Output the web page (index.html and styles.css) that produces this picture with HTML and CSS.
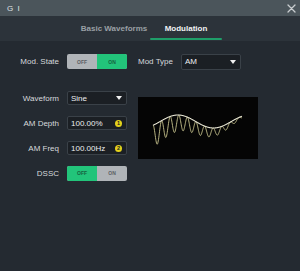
FILE: index.html
```html
<!DOCTYPE html>
<html>
<head>
<meta charset="utf-8">
<link rel="stylesheet" href="styles.css">
</head>
<body>
<div class="win">
  <div class="titlebar">
    <span class="title">G I</span>
    <svg class="close" width="9" height="9" viewBox="0 0 9 9"><path d="M1 1L8 8M8 1L1 8" stroke="#c9cdd0" stroke-width="1.3" stroke-linecap="round"/></svg>
  </div>
  <div class="tabs">
    <div class="tab">Basic Waveforms</div>
    <div class="tab active">Modulation</div>
  </div>
  <div class="content">
    <div class="toprow">
      <div class="form">
        <span class="label">Mod. State</span>
        <div class="toggle"><span class="seg off">OFF</span><span class="seg on lit">ON</span></div>
      </div>
      <span class="label mt">Mod Type</span>
      <div class="select wide"><span>AM</span><span class="caret"></span></div>
    </div>
    <div class="mainrow">
      <div class="form rows">
        <span class="label">Waveform</span>
        <div class="select"><span>Sine</span><span class="caret"></span></div>
        <span class="label">AM Depth</span>
        <div class="select"><span>100.00%</span><span class="badge">1</span></div>
        <span class="label">AM Freq</span>
        <div class="select"><span>100.00Hz</span><span class="badge">2</span></div>
        <span class="label">DSSC</span>
        <div class="toggle"><span class="seg off lit">OFF</span><span class="seg on">ON</span></div>
      </div>
      <div class="display">
        <svg width="120" height="62" viewBox="0 0 120 62">
          <polyline id="carrier" fill="none" stroke="#c9c58f" stroke-width="0.9" points=""/>
          <polyline id="env" fill="none" stroke="#e6e4d2" stroke-width="1.1" points=""/>
        </svg>
      </div>
    </div>
  </div>
</div>
<script src="app.js"></script>
</body>
</html>
```
FILE: app.js
```js
(function(){
  var c=[], e=[];
  var x0=15, x1=104;
  function top(x){ var t=(x-x0)/(x1-x0); return 24.5 - 6.5*Math.sin(2*Math.PI*(t*1.25-0.1)); }
  function amp(x){ var t=(x-x0)/(x1-x0); return 20*(1-t)+2; }
  for(var x=x0;x<=x1;x+=0.25){
    var ph=2*Math.PI*(x-x0)/8.6;
    var y=top(x)+amp(x)*(1-Math.cos(ph))/2;
    c.push(x.toFixed(2)+','+y.toFixed(2));
    e.push(x.toFixed(2)+','+top(x).toFixed(2));
  }
  document.getElementById('carrier').setAttribute('points',c.join(' '));
  document.getElementById('env').setAttribute('points',e.join(' '));
})();
```
FILE: styles.css
```css
html,body{margin:0;padding:0;}
body{background:#242a31;font-family:"Liberation Sans",Arial,sans-serif;color:#e4e6e8;}
.win{width:300px;height:271px;overflow:hidden;background:#242a31;}
.titlebar{height:16px;background:#4b555b;display:flex;align-items:center;justify-content:space-between;padding:0 4px 0 7px;}
.title{font-size:8px;color:#dfe3e5;letter-spacing:1px;}
.close{display:block;}
.tabs{height:25px;background:#2c333a;display:flex;justify-content:center;}
.tab{width:72px;text-align:center;font-size:8px;font-weight:bold;color:#9aa0a5;line-height:25px;position:relative;}
.tab.active{color:#f2f4f5;}
.tab.active::after{content:"";position:absolute;left:0;right:0;bottom:1px;height:2px;border-radius:1px;background:#1f9e69;}
.content{padding-top:13px;}
.toprow{display:flex;align-items:center;height:15px;}
.form{display:grid;grid-template-columns:59px 60px;column-gap:8px;align-items:center;}
.rows{row-gap:11px;grid-auto-rows:14px;}
.label{font-size:8px;color:#d6d9dc;text-align:right;white-space:nowrap;}
.label.mt{text-align:left;margin-left:11px;width:35px;margin-right:8px;}
.toggle{display:flex;height:15px;border-radius:2px;overflow:hidden;background:#b0b4b8;}
.seg{flex:1;display:flex;align-items:center;justify-content:center;font-size:5px;font-weight:bold;color:#5b6064;}
.seg.lit{background:#22c47a;color:#16623f;}
.select{height:14px;box-sizing:border-box;background:#1b1f24;border:1px solid #3a4148;border-radius:2px;display:flex;align-items:center;justify-content:space-between;padding:0 4px 0 3px;font-size:8px;color:#eceef0;}
.select.wide{width:60px;height:16px;}
.caret{width:0;height:0;border-left:3.5px solid transparent;border-right:3.5px solid transparent;border-top:4px solid #f0f0f0;}
.badge{width:7px;height:7px;border-radius:50%;background:#e4d21c;color:#222;font-size:5.5px;font-weight:bold;display:flex;align-items:center;justify-content:center;}
.mainrow{display:flex;align-items:flex-start;margin-top:22px;}
.display{width:120px;height:62px;background:#050505;margin-left:11px;margin-top:6px;}
.display svg{display:block;}
```
